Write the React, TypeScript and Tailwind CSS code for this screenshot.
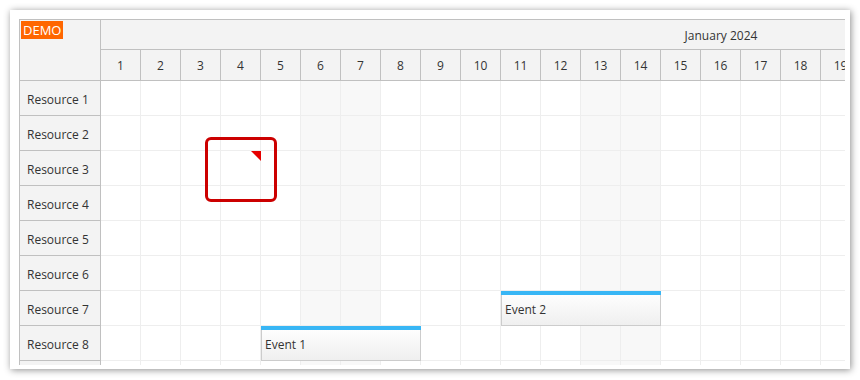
import React from 'react';

const days = Array.from({ length: 31 }, (_, i) => i + 1);
const resources = Array.from({ length: 9 }, (_, i) => `Resource ${i + 1}`);
const weekend = (d: number) => {
  const wd = new Date(2024, 0, d).getDay();
  return wd === 0 || wd === 6;
};

const events = [
  { text: 'Event 1', row: 7, start: 5, len: 4 },
  { text: 'Event 2', row: 6, start: 11, len: 4 },
];

export default function App() {
  return (
    <div
      className="w-[860px] h-[380px] bg-white p-[10px] text-[#333333]"
      style={{ fontFamily: '"Open Sans", "Noto Sans", sans-serif' }}
    >
      <div className="w-[840px] h-[359px] bg-white pl-[9px] pt-[9px] shadow-[1px_1px_7px_rgba(0,0,0,0.45)]">
        <div className="relative w-[826px] h-[346px] overflow-hidden">
          <div className="flex">
            {/* resource column */}
            <div className="flex-none w-[82px] bg-[#f3f3f3] border-l border-r border-[#c0c0c0] h-[400px]">
              <div className="relative h-[62px] border-t border-b border-[#c0c0c0]">
                <div className="absolute left-[1px] top-[1px] bg-[#ff6600] text-white text-[13px] leading-[18px] px-[2px]">
                  DEMO
                </div>
              </div>
              {resources.map((r) => (
                <div
                  key={r}
                  className="h-[35px] border-b border-[#c0c0c0] flex items-center pl-[7px] pt-[3px] text-[12px]"
                >
                  {r}
                </div>
              ))}
            </div>

            {/* timeline */}
            <div className="flex-none w-[1240px]">
              <div className="h-[31px] border-t border-b border-[#c0c0c0] bg-[#f3f3f3] flex items-center justify-center pt-[2px] text-[12px]">
                January 2024
              </div>
              <div className="flex h-[31px] bg-[#f3f3f3]">
                {days.map((d) => (
                  <div
                    key={d}
                    className="w-[40px] flex-none border-r border-b border-[#c0c0c0] flex items-center justify-center pt-[2px] text-[12px]"
                  >
                    {d}
                  </div>
                ))}
              </div>
              <div className="relative">
                {resources.map((r) => (
                  <div key={r} className="flex h-[35px]">
                    {days.map((d) => (
                      <div
                        key={d}
                        className={`w-[40px] flex-none border-r border-b border-[#eeeeee] ${
                          weekend(d) ? 'bg-[#f8f8f8]' : 'bg-white'
                        }`}
                      />
                    ))}
                  </div>
                ))}
                {events.map((e) => (
                  <div
                    key={e.text}
                    className="absolute h-[35px] border border-[#cccccc] bg-gradient-to-b from-white to-[#efefef] text-[12px] flex items-center pl-[3px] pt-[3px]"
                    style={{ left: (e.start - 1) * 40, top: e.row * 35, width: e.len * 40 }}
                  >
                    <div className="absolute -left-px -right-px -top-px h-[4px] bg-[#38b6f5]" />
                    {e.text}
                  </div>
                ))}
              </div>
            </div>
          </div>

          {/* highlighted cell */}
          <div className="absolute left-[186px] top-[118px] w-[72px] h-[65px] border-[3px] border-[#cc0000] rounded-[6px]" />
          <svg className="absolute left-[232px] top-[132px]" width="10" height="10" viewBox="0 0 10 10">
            <polygon points="0,0 10,0 10,10" fill="#e60000" />
          </svg>
        </div>
      </div>
    </div>
  );
}
